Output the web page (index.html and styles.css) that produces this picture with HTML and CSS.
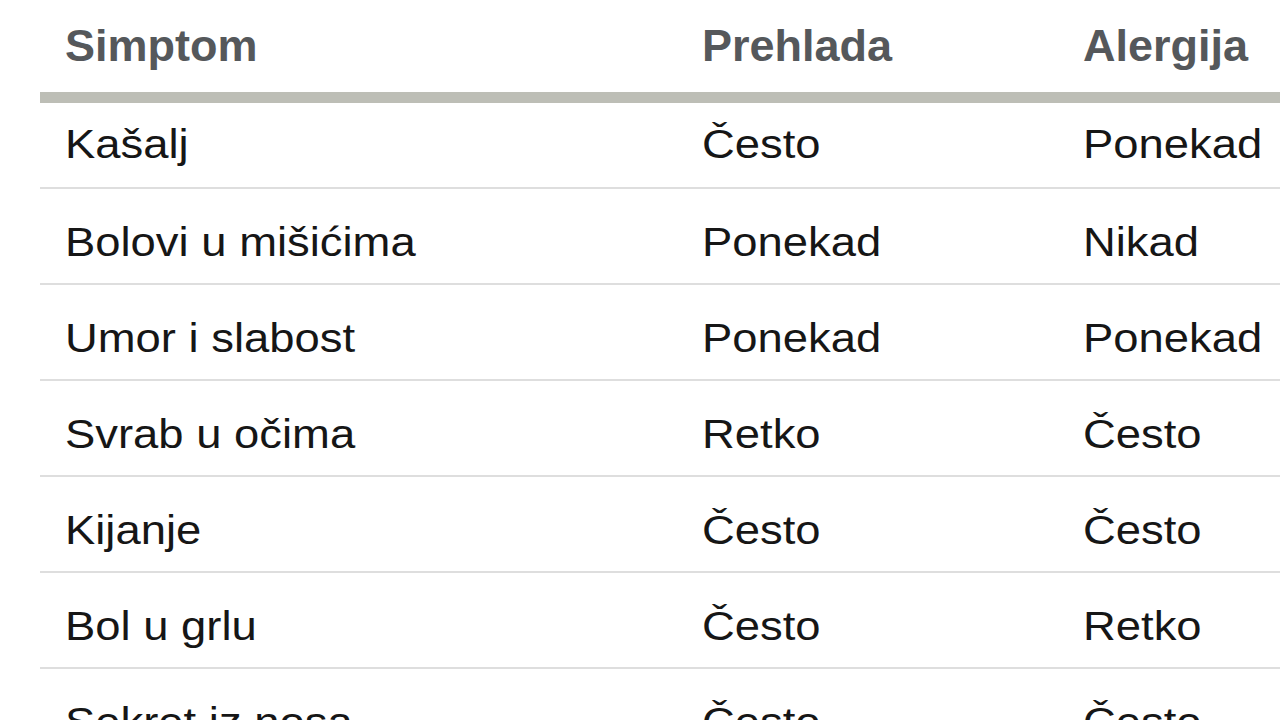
FILE: index.html
```html
<!DOCTYPE html>
<html lang="sr">
<head>
<meta charset="utf-8">
<title>Simptomi</title>
<link rel="stylesheet" href="styles.css">
</head>
<body>
<table class="sym-table">
  <colgroup>
    <col class="c1"><col class="c2"><col class="c3">
  </colgroup>
  <thead>
    <tr><th>Simptom</th><th>Prehlada</th><th>Alergija</th></tr>
  </thead>
  <tbody>
    <tr class="first"><td><span>Kašalj</span></td><td><span>Često</span></td><td><span>Ponekad</span></td></tr>
    <tr><td><span>Bolovi u mišićima</span></td><td><span>Ponekad</span></td><td><span>Nikad</span></td></tr>
    <tr><td><span>Umor i slabost</span></td><td><span>Ponekad</span></td><td><span>Ponekad</span></td></tr>
    <tr><td><span>Svrab u očima</span></td><td><span>Retko</span></td><td><span>Često</span></td></tr>
    <tr><td><span>Kijanje</span></td><td><span>Često</span></td><td><span>Često</span></td></tr>
    <tr><td><span>Bol u grlu</span></td><td><span>Često</span></td><td><span>Retko</span></td></tr>
    <tr><td><span>Sekret iz nosa</span></td><td><span>Često</span></td><td><span>Često</span></td></tr>
  </tbody>
</table>
</body>
</html>
```

FILE: styles.css
```css
html, body {
  margin: 0;
  padding: 0;
  background: #ffffff;
  overflow: hidden;
  width: 1280px;
  height: 720px;
}

body {
  padding-left: 40px;
  font-family: "Liberation Sans", Arial, Helvetica, sans-serif;
}

.sym-table {
  border-collapse: collapse;
  border-spacing: 0;
  table-layout: fixed;
  width: 1400px;
}

.c1 { width: 637px; }
.c2 { width: 381px; }
.c3 { width: 382px; }

.sym-table th {
  text-align: left;
  font-weight: bold;
  font-size: 45px;
  line-height: 45px;
  color: #55585b;
  padding: 23px 0 24px 25px;
  border-bottom: 11px solid #bdbeb6;
  white-space: nowrap;
}

.sym-table td {
  font-size: 40px;
  line-height: 40px;
  color: #161616;
  padding: 33px 0 21px 25px;
  border-bottom: 2px solid #dedede;
  white-space: nowrap;
}

.sym-table tr.first td {
  padding-top: 21px;
  padding-bottom: 23px;
}

.sym-table td span {
  display: inline-block;
  transform: scaleX(1.135);
  transform-origin: left center;
}
```
